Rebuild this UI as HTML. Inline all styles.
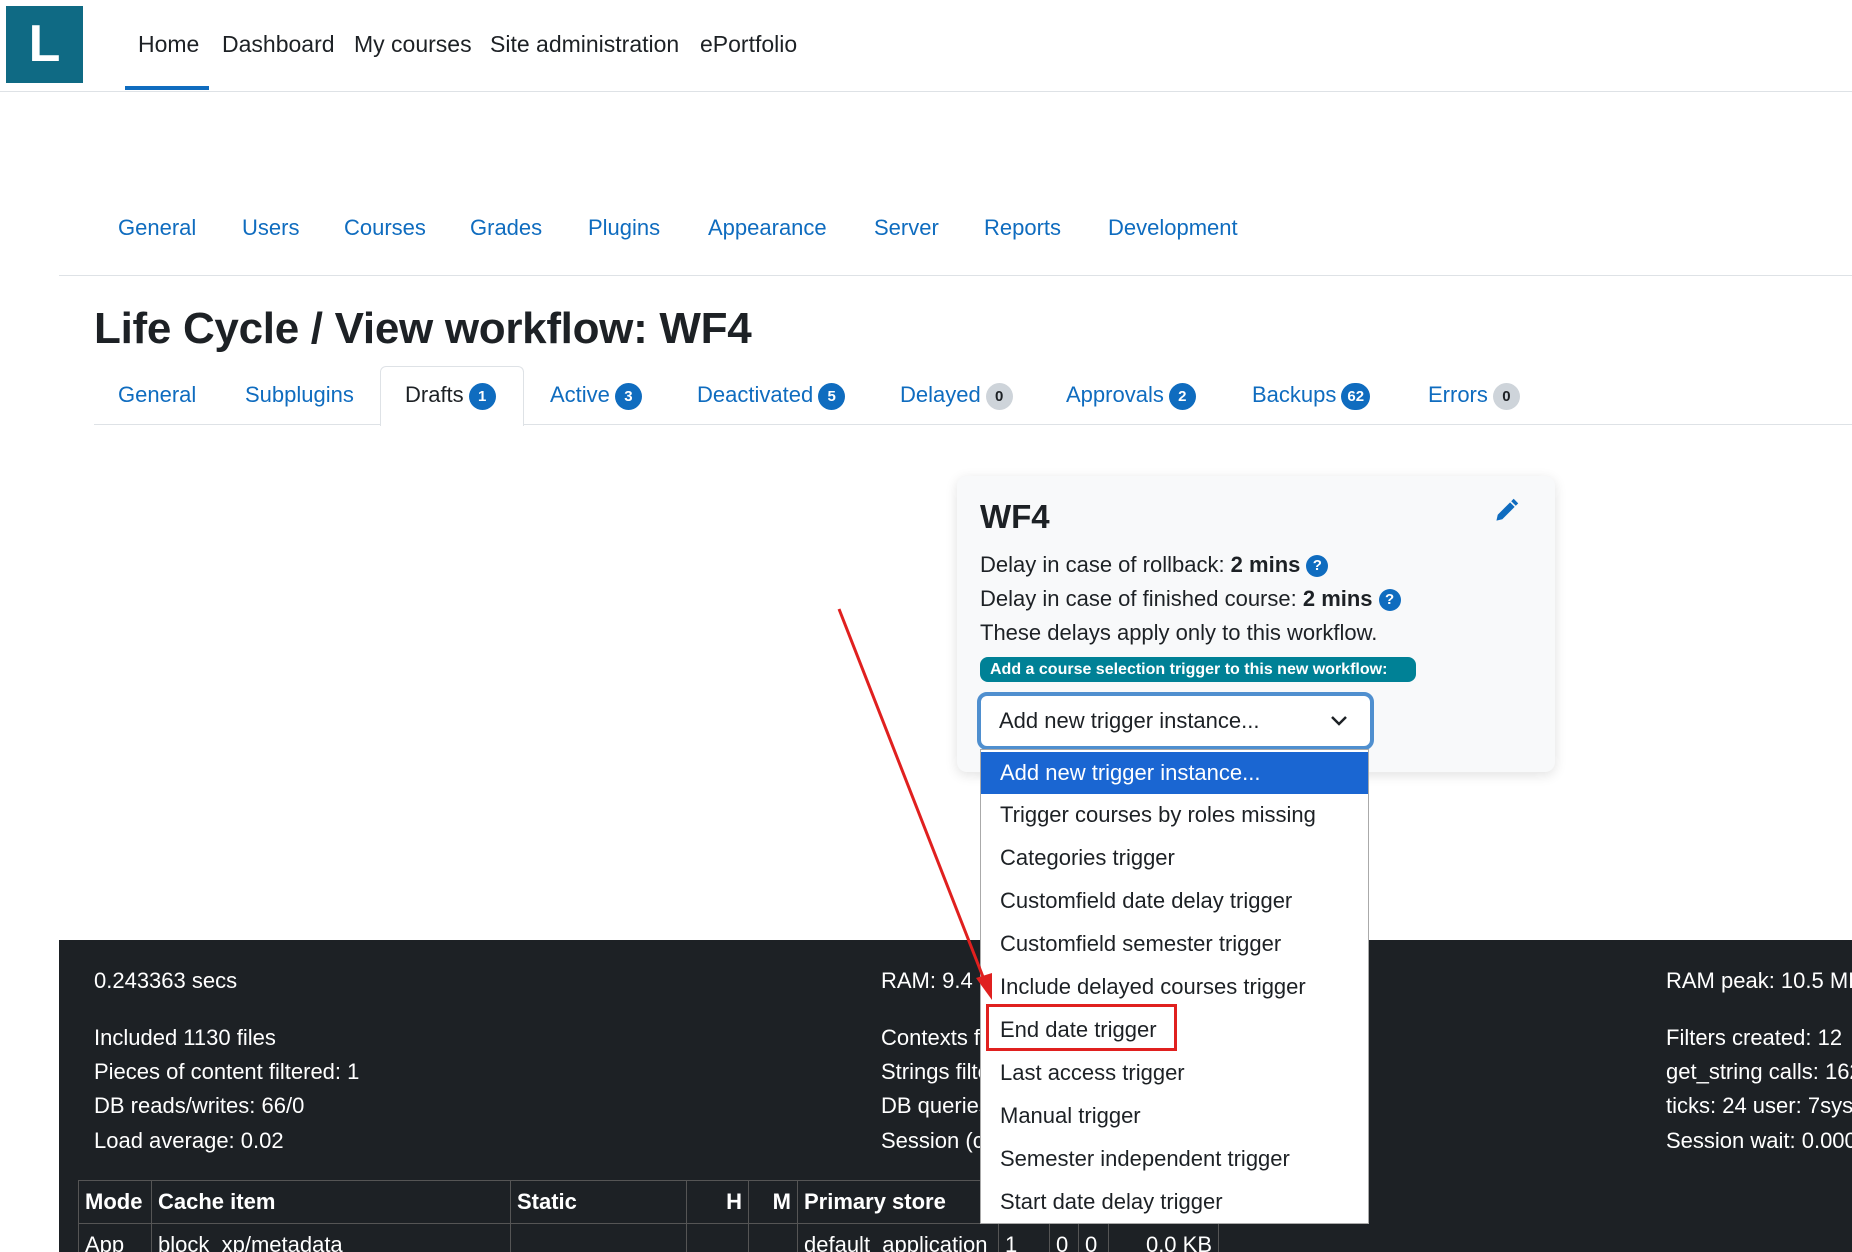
<!DOCTYPE html>
<html style="overflow:hidden;height:1252px"><head><meta charset="utf-8"><style>
*{box-sizing:border-box;margin:0;padding:0}
body{width:1852px;height:1252px;overflow:hidden;background:#fff;font-family:"Liberation Sans",sans-serif;color:#1d2125;position:relative}
.a{position:absolute;white-space:nowrap}
.logo{left:6px;top:6px;width:77px;height:77px;background:#0f6a84;color:#fff;font-size:52px;font-weight:bold;text-align:center;line-height:77px}
.nav{top:31px;font-size:23px;color:#1d2125}
.sec{top:215px;font-size:22px;color:#0f6cbf}
.tab{top:382px;font-size:22px;color:#0f6cbf}
.bd{display:inline-block;border-radius:14px;color:#fff;font-size:15px;font-weight:bold;min-width:27px;height:27px;line-height:27px;text-align:center;padding:0 6px;vertical-align:middle;margin-left:5px;background:#0f6cbf}
.gr{background:#ced4da;color:#1d2125}
.card{left:957px;top:476px;width:598px;height:296px;background:#f8f9fa;border-radius:10px;box-shadow:0 3px 12px rgba(0,0,0,.12)}
.t{font-size:22px}
.q{display:inline-block;width:22px;height:22px;border-radius:50%;background:#0f6cbf;color:#fff;font-size:15px;font-weight:bold;text-align:center;line-height:22px;vertical-align:2px;margin-left:6px}
.foot{left:59px;top:940px;width:1793px;height:312px;background:#1d2125}
.ft{color:#fff;font-size:22px}
.dd{left:980px;top:749px;width:389px;height:475px;background:#fff;border:1px solid #aaa}
.it{position:absolute;left:0;width:387px;height:42px;line-height:42px;padding-left:19px;font-size:22px;color:#1d2125}
.tw{position:absolute;left:78px;top:1180px;width:1200px;height:72px;overflow:hidden}
table{border-collapse:collapse;color:#fff;font-size:22px}
td,th{border:1px solid #555;padding:0 6px;height:43px;text-align:left}
</style></head><body>
<div class="a logo">L</div>
<div class="a nav" style="left:138px">Home</div>
<div class="a nav" style="left:222px">Dashboard</div>
<div class="a nav" style="left:354px">My courses</div>
<div class="a nav" style="left:490px">Site administration</div>
<div class="a nav" style="left:700px">ePortfolio</div>
<div class="a" style="left:125px;top:86px;width:84px;height:4px;background:#0f6cbf"></div>
<div class="a" style="left:0;top:91px;width:1852px;height:1px;background:#dee2e6"></div>

<div class="a sec" style="left:118px">General</div>
<div class="a sec" style="left:242px">Users</div>
<div class="a sec" style="left:344px">Courses</div>
<div class="a sec" style="left:470px">Grades</div>
<div class="a sec" style="left:588px">Plugins</div>
<div class="a sec" style="left:708px">Appearance</div>
<div class="a sec" style="left:874px">Server</div>
<div class="a sec" style="left:984px">Reports</div>
<div class="a sec" style="left:1108px">Development</div>
<div class="a" style="left:59px;top:275px;width:1793px;height:1px;background:#dee2e6"></div>

<div class="a" style="left:94px;top:304px;font-size:44px;font-weight:bold;letter-spacing:-0.3px">Life Cycle / View workflow: WF4</div>
<div class="a" style="left:94px;top:424px;width:1758px;height:1px;background:#dee2e6"></div>
<div class="a" style="left:380px;top:366px;width:144px;height:60px;background:#fff;border:1px solid #dee2e6;border-bottom:none;border-radius:6px 6px 0 0"></div>
<div class="a tab" style="left:118px">General</div>
<div class="a tab" style="left:245px">Subplugins</div>
<div class="a tab" style="left:405px;color:#1d2125">Drafts<span class="bd">1</span></div>
<div class="a tab" style="left:550px">Active<span class="bd">3</span></div>
<div class="a tab" style="left:697px">Deactivated<span class="bd">5</span></div>
<div class="a tab" style="left:900px">Delayed<span class="bd gr">0</span></div>
<div class="a tab" style="left:1066px">Approvals<span class="bd">2</span></div>
<div class="a tab" style="left:1252px">Backups<span class="bd">62</span></div>
<div class="a tab" style="left:1428px">Errors<span class="bd gr">0</span></div>

<div class="a card"></div>
<div class="a" style="left:980px;top:498px;font-size:33px;font-weight:bold">WF4</div>
<svg class="a" style="left:1494px;top:497px" width="26" height="26" viewBox="0 0 16 16"><path fill="#0f6cbf" d="M12.1 1.1l2.8 2.8-1.5 1.5-2.8-2.8zM9.9 3.3l2.8 2.8-7.6 7.6-3.6.8.8-3.6z"/></svg>
<div class="a t" style="left:980px;top:552px">Delay in case of rollback: <b>2 mins</b><span class="q">?</span></div>
<div class="a t" style="left:980px;top:586px">Delay in case of finished course: <b>2 mins</b><span class="q">?</span></div>
<div class="a t" style="left:980px;top:620px">These delays apply only to this workflow.</div>
<div class="a" style="left:980px;top:657px;width:436px;height:25px;background:#008196;border-radius:8px;color:#fff;font-weight:bold;font-size:16px;line-height:25px;padding-left:10px">Add a course selection trigger to this new workflow:</div>
<div class="a" style="left:977px;top:692px;width:397px;height:58px;border:4px solid #4f8fcf;border-radius:10px;background:#fff"></div>
<div class="a t" style="left:999px;top:708px">Add new trigger instance...</div>
<svg class="a" style="left:1330px;top:714px" width="18" height="14" viewBox="0 0 18 14"><path d="M2 3l7 7 7-7" fill="none" stroke="#1d2125" stroke-width="2.5"/></svg>

<div class="a foot"></div>
<div class="a ft" style="left:94px;top:968px">0.243363 secs</div>
<div class="a ft" style="left:94px;top:1025px">Included 1130 files</div>
<div class="a ft" style="left:94px;top:1059px">Pieces of content filtered: 1</div>
<div class="a ft" style="left:94px;top:1093px">DB reads/writes: 66/0</div>
<div class="a ft" style="left:94px;top:1128px">Load average: 0.02</div>
<div class="a ft" style="left:881px;top:968px">RAM: 9.4 MB</div>
<div class="a ft" style="left:881px;top:1025px">Contexts for which filters were loaded</div>
<div class="a ft" style="left:881px;top:1059px">Strings filtered</div>
<div class="a ft" style="left:881px;top:1093px">DB queries time</div>
<div class="a ft" style="left:881px;top:1128px">Session (core)</div>
<div class="a ft" style="left:1666px;top:968px">RAM peak: 10.5 MB</div>
<div class="a ft" style="left:1666px;top:1025px">Filters created: 12</div>
<div class="a ft" style="left:1666px;top:1059px">get_string calls: 162</div>
<div class="a ft" style="left:1666px;top:1093px">ticks: 24 user: 7sys:</div>
<div class="a ft" style="left:1666px;top:1128px">Session wait: 0.000</div>
<div class="tw"><table>
<tr><th style="width:73px">Mode</th><th style="width:359px">Cache item</th><th style="width:176px">Static</th><th style="width:62px;text-align:right">H</th><th style="width:49px;text-align:right">M</th><th style="width:201px">Primary store</th><th style="width:51px"></th><th style="width:29px"></th><th style="width:30px"></th><th style="width:110px"></th></tr>
<tr><td>App</td><td>block_xp/metadata</td><td></td><td></td><td></td><td>default_application</td><td>1</td><td>0</td><td>0</td><td style="text-align:right">0.0 KB</td></tr>
</table></div>

<div class="a dd">
<div class="it" style="top:2px;background:#1a66d2;color:#fff">Add new trigger instance...</div>
<div class="it" style="top:44px">Trigger courses by roles missing</div>
<div class="it" style="top:87px">Categories trigger</div>
<div class="it" style="top:130px">Customfield date delay trigger</div>
<div class="it" style="top:173px">Customfield semester trigger</div>
<div class="it" style="top:216px">Include delayed courses trigger</div>
<div class="it" style="top:259px">End date trigger</div>
<div class="it" style="top:302px">Last access trigger</div>
<div class="it" style="top:345px">Manual trigger</div>
<div class="it" style="top:388px">Semester independent trigger</div>
<div class="it" style="top:431px">Start date delay trigger</div>
</div>
<div class="a" style="left:986px;top:1004px;width:191px;height:47px;border:3px solid #e0201f"></div>
<svg class="a" style="left:0;top:0" width="1852" height="1252"><line x1="839" y1="609" x2="985" y2="982" stroke="#e0201f" stroke-width="3"/><path d="M992 1000 L976 978 L992 973 Z" fill="#e0201f"/></svg>
</body></html>
